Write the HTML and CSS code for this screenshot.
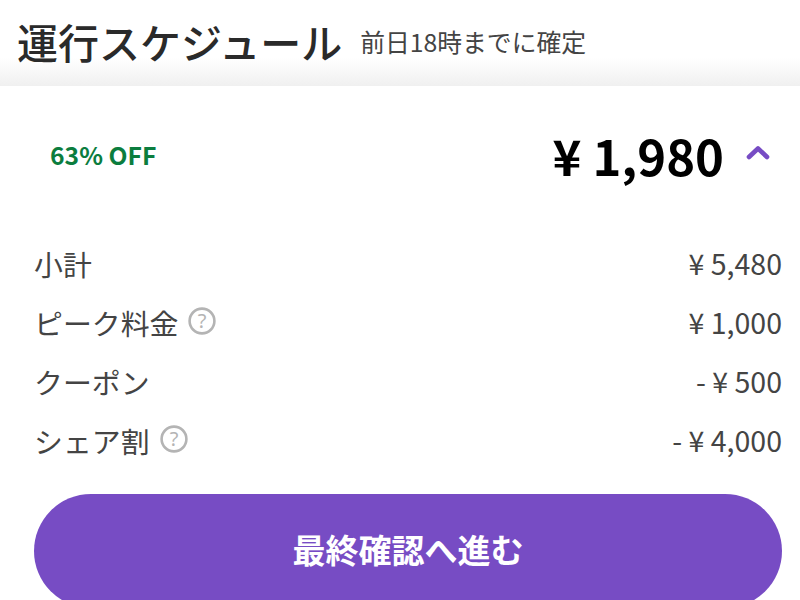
FILE: index.html
```html
<!DOCTYPE html>
<html lang="ja">
<head>
<meta charset="utf-8">
<title>運行スケジュール</title>
<link rel="stylesheet" href="styles.css">
</head>
<body>
<header class="head">
  <h1 class="title">運行スケジュール</h1>
  <span class="note">前日18時までに確定</span>
</header>
<main class="panel">
  <div class="summary">
    <span class="off">63% OFF</span>
    <div class="total">
      <span class="price">¥ 1,980</span>
      <svg class="chev" width="26" height="16" viewBox="0 0 26 16"><path d="M3 13 L12 4.5 L21 13" fill="none" stroke="#774cc4" stroke-width="4.6" stroke-linecap="round" stroke-linejoin="round"/></svg>
    </div>
  </div>
  <ul class="rows">
    <li class="row"><span class="label">小計</span><span class="val">¥ 5,480</span></li>
    <li class="row"><span class="label">ピーク料金<svg class="help" width="28" height="28" viewBox="0 0 28 28"><circle cx="14" cy="14" r="12.4" fill="none" stroke="#b4b4b4" stroke-width="2.6"/><text x="14" y="20.5" text-anchor="middle" class="q">?</text></svg></span><span class="val">¥ 1,000</span></li>
    <li class="row"><span class="label">クーポン</span><span class="val">- ¥ 500</span></li>
    <li class="row"><span class="label">シェア割<svg class="help" width="28" height="28" viewBox="0 0 28 28"><circle cx="14" cy="14" r="12.4" fill="none" stroke="#b4b4b4" stroke-width="2.6"/><text x="14" y="20.5" text-anchor="middle" class="q">?</text></svg></span><span class="val">- ¥ 4,000</span></li>
  </ul>
  <button class="cta">最終確認へ進む</button>
</main>
</body>
</html>
```
FILE: styles.css
```css
* { box-sizing: border-box; }
html, body { margin: 0; padding: 0; height: 600px; overflow: hidden; background: #fff; }
body { font-family: "Noto Sans CJK JP", "Noto Sans", sans-serif; color: #333; }
.head {
  height: 86px;
  padding: 0 17px 4px;
  display: flex;
  align-items: center;
  gap: 18px;
  background: linear-gradient(to bottom, #fff 0, #fff 58px, #f0f0f0 86px);
}
.title { margin: 0; font-size: 41px; line-height: 60px; font-weight: 500; color: #2a2a2a; }
.note { font-size: 24.8px; line-height: 36px; color: #444; margin-top: 0; }
.panel { padding: 0 18px 0 34px; }
.summary {
  height: 147px;
  padding: 0 10px 9px 16px;
  display: flex;
  justify-content: space-between;
  align-items: center;
}
.off { font-size: 24.7px; font-weight: 700; color: #0b7d3e; margin-top: -2px; }
.total { display: flex; align-items: center; gap: 22px; }
.price { font-size: 49px; line-height: 64px; font-weight: 700; color: #000; }
.chev { margin-bottom: 6px; }
.rows { list-style: none; margin: 0; padding: 0; }
.row { height: 59px; display: flex; justify-content: space-between; align-items: center; font-size: 28.5px; color: #444; }
.label { display: flex; align-items: center; gap: 10px; font-size: 28.9px; }
.help { margin-top: -2px; }
.q { font-size: 20px; fill: #b4b4b4; font-family: "Noto Sans", sans-serif; }
.val { color: #444; }
.cta {
  display: block;
  width: 100%;
  height: 114px;
  margin-top: 25px;
  padding: 0 0 5px;
  border: 0;
  border-radius: 57px;
  background: #774cc4;
  color: #fff;
  font: 700 33px "Noto Sans CJK JP", sans-serif;
}
```
